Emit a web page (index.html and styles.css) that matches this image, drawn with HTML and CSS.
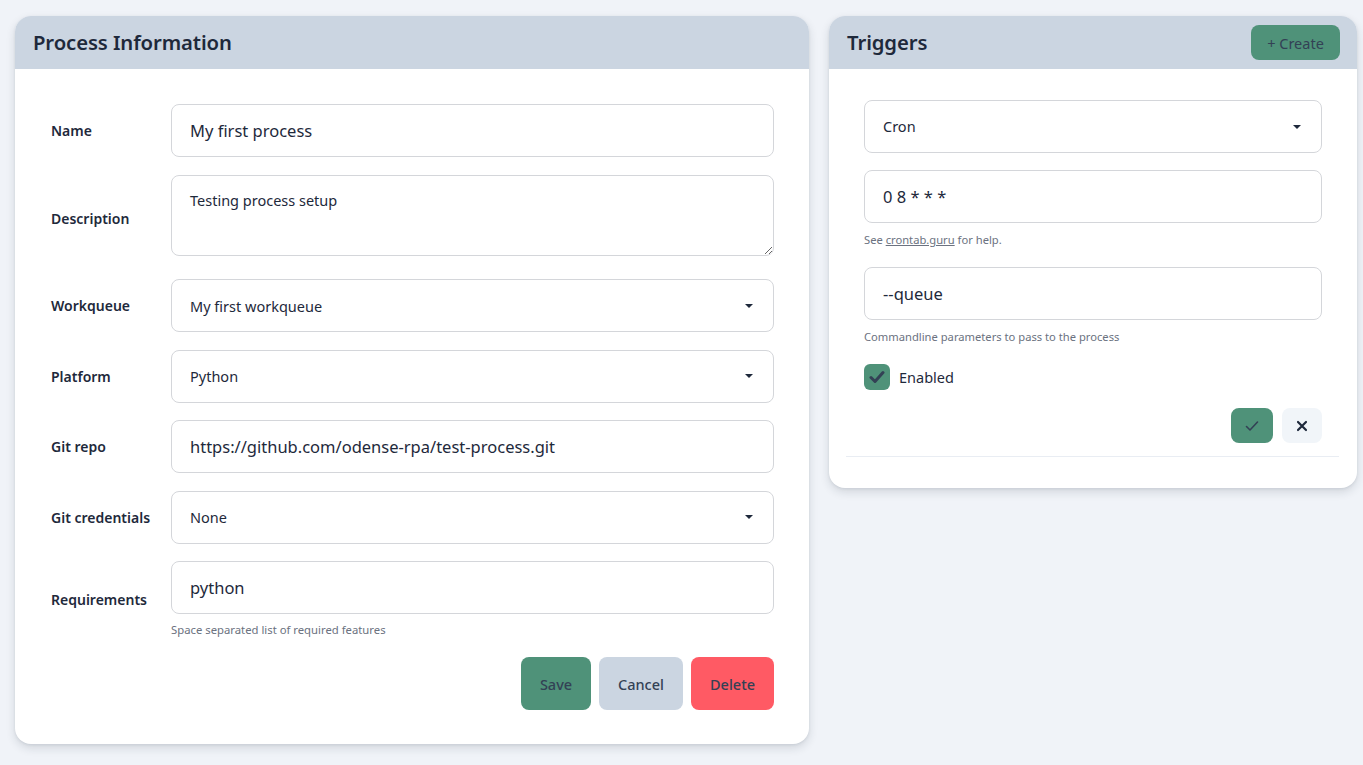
FILE: index.html
```html
<!DOCTYPE html>
<html lang="en">
<head>
<meta charset="utf-8">
<title>Process</title>
<link rel="stylesheet" href="styles.css">
</head>
<body>
<main class="page">
  <section class="card card-process">
    <header class="card-header">
      <h2 class="card-title">Process Information</h2>
    </header>
    <div class="card-body process-body">
      <div class="form-grid">
        <label class="field-label">Name</label>
        <div class="field"><input class="text-input" type="text" value="My first process"></div>

        <label class="field-label">Description</label>
        <div class="field field-area"><textarea class="text-area">Testing process setup</textarea></div>

        <label class="field-label">Workqueue</label>
        <div class="field">
          <div class="select">
            <span class="select-value">My first workqueue</span>
            <svg class="caret" width="8" height="4" viewBox="0 0 8 4"><path d="M0 0H8L4 4Z" fill="#1e293b"/></svg>
          </div>
        </div>

        <label class="field-label">Platform</label>
        <div class="field">
          <div class="select">
            <span class="select-value">Python</span>
            <svg class="caret" width="8" height="4" viewBox="0 0 8 4"><path d="M0 0H8L4 4Z" fill="#1e293b"/></svg>
          </div>
        </div>

        <label class="field-label">Git repo</label>
        <div class="field"><input class="text-input" type="text" value="https://github.com/odense-rpa/test-process.git"></div>

        <label class="field-label">Git credentials</label>
        <div class="field">
          <div class="select">
            <span class="select-value">None</span>
            <svg class="caret" width="8" height="4" viewBox="0 0 8 4"><path d="M0 0H8L4 4Z" fill="#1e293b"/></svg>
          </div>
        </div>

        <label class="field-label">Requirements</label>
        <div class="field">
          <input class="text-input" type="text" value="python">
          <p class="hint">Space separated list of required features</p>
        </div>
      </div>
      <div class="actions">
        <button class="btn btn-save">Save</button>
        <button class="btn btn-cancel">Cancel</button>
        <button class="btn btn-delete">Delete</button>
      </div>
    </div>
  </section>

  <section class="card card-triggers">
    <header class="card-header">
      <h2 class="card-title">Triggers</h2>
      <button class="btn-create">+ Create</button>
    </header>
    <div class="card-body triggers-body">
      <div class="trigger-item">
        <div class="select select-sm">
          <span class="select-value">Cron</span>
          <svg class="caret" width="8" height="4" viewBox="0 0 8 4"><path d="M0 0H8L4 4Z" fill="#1e293b"/></svg>
        </div>
        <input class="text-input t-input" type="text" value="0 8 * * *">
        <p class="hint t-hint">See <span class="link">crontab.guru</span> for help.</p>
        <input class="text-input t-input" type="text" value="--queue">
        <p class="hint t-hint">Commandline parameters to pass to the process</p>
        <div class="check-row">
          <span class="checkbox">
            <svg width="16" height="14" viewBox="0 0 16 14"><path d="M2 7.5L6 11.5L14 2.5" fill="none" stroke="#334155" stroke-width="3" stroke-linecap="round" stroke-linejoin="round"/></svg>
          </span>
          <span class="check-label">Enabled</span>
        </div>
        <div class="item-actions">
          <button class="icon-btn icon-ok">
            <svg width="14" height="12" viewBox="0 0 14 12"><path d="M1.5 6.5L5 10L12.5 2" fill="none" stroke="#334155" stroke-width="1.6" stroke-linecap="round" stroke-linejoin="round"/></svg>
          </button>
          <button class="icon-btn icon-cancel">
            <svg width="12" height="12" viewBox="0 0 12 12"><path d="M2 2L10 10M10 2L2 10" fill="none" stroke="#1e293b" stroke-width="2.2" stroke-linecap="round"/></svg>
          </button>
        </div>
      </div>
    </div>
  </section>
</main>
</body>
</html>
```

FILE: styles.css
```css
* { box-sizing: border-box; }

html, body {
  margin: 0;
  padding: 0;
}

body {
  background: #f0f3f8;
  font-family: "Noto Sans", "Open Sans", sans-serif;
  color: #1e293b;
}

.page {
  display: flex;
  align-items: flex-start;
  gap: 20px;
  padding: 16px 6px 20px 15px;
}

.card {
  background: #ffffff;
  border-radius: 16px;
  box-shadow: 0 4px 10px rgba(30, 41, 59, 0.14), 0 1px 3px rgba(30, 41, 59, 0.08);
  overflow: hidden;
}

.card-process { width: 794px; }
.card-triggers { width: 528px; }

.card-header {
  height: 53px;
  background: #cbd5e1;
  display: flex;
  align-items: center;
  justify-content: space-between;
  padding: 0 17px 0 18px;
}

.card-title {
  margin: 0 0 2px;
  font-size: 20.3px;
  font-weight: 600;
  color: #1e293b;
  letter-spacing: -0.1px;
}

.process-body {
  padding: 35px 35px 34px 36px;
}

.form-grid {
  display: grid;
  grid-template-columns: 120px 1fr;
  row-gap: 17.5px;
  align-items: center;
}

.field-label {
  font-size: 14px;
  font-weight: 600;
  color: #1e293b;
}

.field {
  display: flex;
  flex-direction: column;
}

.field-area { padding-bottom: 6px; }

.text-input {
  width: 100%;
  height: 53px;
  border: 1px solid #d4d6da;
  border-radius: 8px;
  padding: 0 18px;
  font-family: inherit;
  font-size: 16.5px;
  color: #1e293b;
  background: #fff;
  outline: none;
}

.text-area {
  width: 100%;
  height: 81px;
  border: 1px solid #d4d6da;
  border-radius: 8px;
  padding: 14px 18px;
  font-family: inherit;
  font-size: 14.5px;
  color: #1e293b;
  resize: vertical;
  display: block;
  outline: none;
}

.select {
  height: 53px;
  border: 1px solid #d4d6da;
  border-radius: 8px;
  padding: 0 20px 0 18px;
  display: flex;
  align-items: center;
  justify-content: space-between;
  font-size: 14.5px;
  color: #1e293b;
  background: #fff;
}

.select-sm .select-value { margin-top: -1px; }

.caret { display: block; }

.hint {
  margin: 8px 0 0;
  font-size: 11.3px;
  line-height: 15px;
  color: #6b7280;
}

.actions {
  display: flex;
  justify-content: flex-end;
  gap: 8px;
  margin-top: 20px;
}

.btn {
  height: 53px;
  border: none;
  border-radius: 8px;
  font-family: inherit;
  font-size: 14.5px;
  font-weight: 500;
  color: #334155;
  padding: 0 12px;
}

.btn-save { background: #4f9279; width: 70px; }
.btn-cancel { background: #cbd5e1; width: 84px; }
.btn-delete { background: #ff5a64; width: 83px; }

.btn-create {
  height: 35px;
  width: 89px;
  border: none;
  border-radius: 8px;
  background: #4f9279;
  color: #334155;
  font-family: inherit;
  font-size: 14.5px;
}

.triggers-body {
  padding: 31px 18px 31px 17px;
}

.trigger-item {
  display: flex;
  flex-direction: column;
  padding: 0 17px 13px 18px;
  border-bottom: 1px solid #e9edf3;
}

.t-input { margin-top: 17px; }

.t-hint {
  margin-top: 9px;
  margin-bottom: 3px;
  font-size: 11.2px;
}

.link { text-decoration: underline; color: #6b7280; }

.check-row {
  display: flex;
  align-items: center;
  gap: 9px;
  margin-top: 17px;
}

.checkbox {
  width: 26px;
  height: 26px;
  border-radius: 6px;
  background: #4f9279;
  display: flex;
  align-items: center;
  justify-content: center;
}

.check-label {
  font-size: 14.5px;
  color: #1e293b;
}

.item-actions {
  display: flex;
  justify-content: flex-end;
  gap: 9px;
  margin-top: 18px;
}

.icon-btn {
  height: 35px;
  border: none;
  border-radius: 8px;
  display: flex;
  align-items: center;
  justify-content: center;
  padding: 0;
}

.icon-ok { width: 42px; background: #4f9279; }
.icon-cancel { width: 40px; background: #f1f5f9; }
```
